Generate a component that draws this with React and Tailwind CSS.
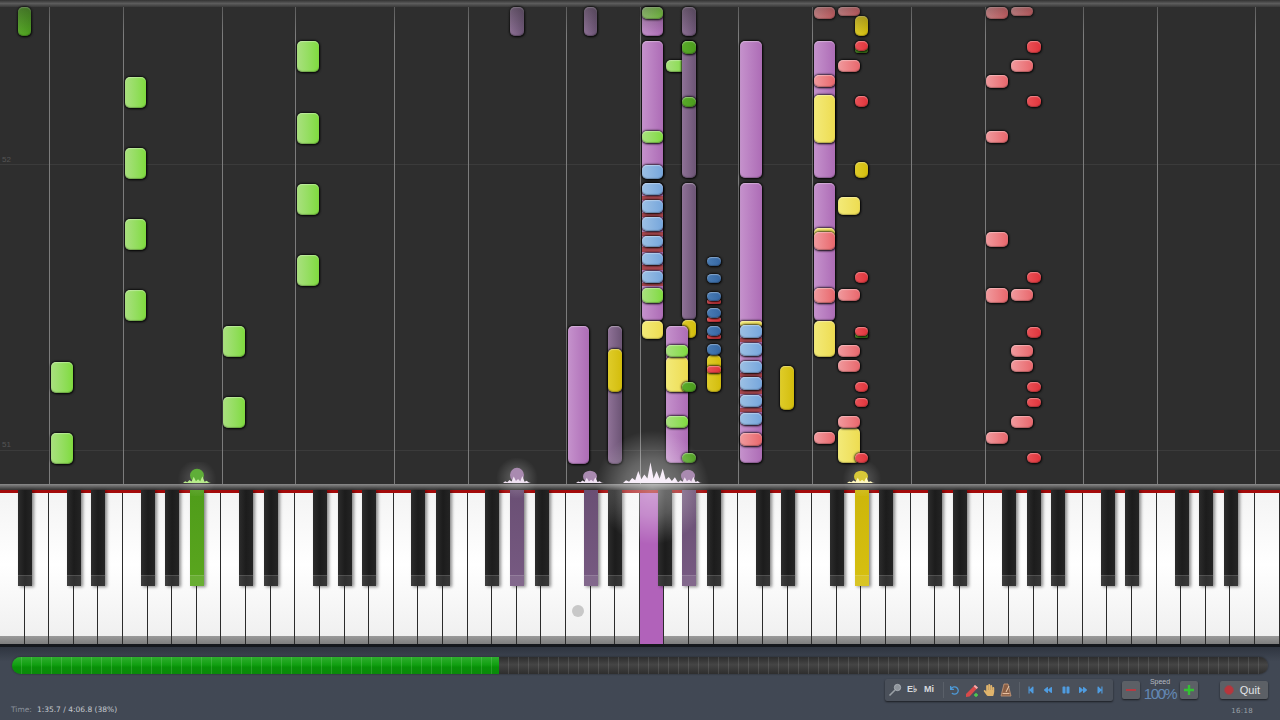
import React from "react";
import { FaHandPaper, FaStepBackward, FaBackward, FaPause, FaForward, FaStepForward, FaUndo } from "react-icons/fa";

const KEY = 1280 / 52;
const BEVEL = "shadow-[inset_0_1px_1px_rgba(255,255,255,.35),inset_0_-1px_1px_rgba(0,0,0,.25),0_0_2px_1px_rgba(0,0,0,.7),1px_1px_2px_rgba(0,0,0,.5)]";
const KIND = {
  g: "bg-linear-to-r from-[#a9e07e] to-[#7fdb3c]",
  G: "bg-linear-to-r from-[#5aab2a] to-[#4a9c1c]",
  p: "bg-linear-to-r from-[#c592cc] to-[#ad6cb6]",
  P: "bg-linear-to-r from-[#8f7297] to-[#6c5475]",
  y: "bg-linear-to-r from-[#f3ea78] to-[#eddc50]",
  Y: "bg-linear-to-r from-[#dfcc28] to-[#d3bd08]",
  b: "bg-linear-to-r from-[#9cc0e4] to-[#76a6dc]",
  B: "bg-linear-to-r from-[#4a7cb4] to-[#3567a4]",
  r: "bg-linear-to-r from-[#f09a9e] to-[#e8666c]",
  R: "bg-linear-to-r from-[#ea5056] to-[#e0343c]",
  s: "bg-[#a8474f]",
};

const A = 641.5, B = 682, C = 740, D = 813.5, E = 838, F = 854.5, W = 21.5, N = 13.5;
const NOTES = [
  [17.5, 7, N, 29, "G"],
  ...[77, 148, 219, 290].map((y) => [124.5, y, W, 31, "g"]),
  ...[41, 113, 184, 255].map((y) => [297, y, W, 31, "g"]),
  ...[362, 433].map((y) => [51, y, W, 31, "g"]),
  ...[326, 397].map((y) => [223, y, W, 31, "g"]),
  [510, 7, N, 29, "P"],
  [583.5, 7, N, 29, "P"],
  [567.5, 326, W, 138, "p"],
  [608, 326, N, 138, "P"],
  [608, 349, N, 43, "Y"],
  [A, 7, W, 29, "p"],
  [A, 7, W, 12, "g"],
  [A, 41, W, 137, "p"],
  [A, 131, W, 12, "g"],
  [A, 165, W, 14, "b"],
  [A, 183, W, 138, "p"],
  [A, 196, W, 4, "s"], [A, 213, W, 4, "s"], [A, 232, W, 4, "s"], [A, 247, W, 5, "s"], [A, 265, W, 5, "s"], [A, 283, W, 3, "s"],
  [A, 183, W, 12, "b"], [A, 200, W, 13, "b"], [A, 217, W, 14, "b"], [A, 236, W, 11, "b"], [A, 253, W, 12, "b"], [A, 271, W, 12, "b"],
  [A, 288, W, 15, "g"],
  [A, 321, W, 18, "y"],
  [666, 60, 21, 12, "g"],
  [B, 7, N, 29, "P"],
  [B, 41, N, 137, "P"],
  [B, 41, N, 13, "G"],
  [B, 97, N, 10, "G"],
  [B, 183, N, 137, "P"],
  [B, 320, N, 18, "Y"],
  [666, 326, W, 137, "p"],
  [666, 357, W, 35, "y"],
  [666, 345, W, 12, "g"],
  [666, 416, W, 12, "g"],
  [B, 382, N, 10, "G"],
  [B, 453, N, 10, "G"],
  [707, 257, N, 9, "B"],
  [707, 274, N, 9, "B"],
  [707, 299, N, 5, "R"], [707, 292, N, 9, "B"],
  [707, 317, N, 5, "R"], [707, 308, N, 10, "B"],
  [707, 334, N, 5, "R"], [707, 326, N, 10, "B"],
  [707, 355, N, 37, "Y"],
  [707, 344, N, 11, "B"],
  [707, 366, N, 7, "R"],
  [C, 41, W, 137, "p"],
  [C, 183, W, 280, "p"],
  [C, 321, W, 6, "y"],
  [C, 338, W, 4, "s"], [C, 373, W, 4, "s"], [C, 390, W, 4, "s"], [C, 408, W, 4, "s"],
  [C, 325, W, 13, "b"], [C, 343, W, 13, "b"], [C, 361, W, 12, "b"], [C, 377, W, 13, "b"], [C, 395, W, 12, "b"], [C, 413, W, 12, "b"],
  [C, 433, W, 13, "r"],
  [780, 366, N, 44, "Y"],
  [D, 7, W, 12, "r"],
  [D, 41, W, 137, "p"],
  [D, 75, W, 12, "r"],
  [D, 95, W, 48, "y"],
  [D, 183, W, 138, "p"],
  [D, 228, W, 14, "y"],
  [D, 232, W, 18, "r"],
  [D, 288, W, 15, "r"],
  [D, 321, W, 36, "y"],
  [D, 432, W, 12, "r"],
  [E, 7, W, 9, "r"],
  [E, 60, W, 12, "r"],
  [E, 197, W, 18, "y"],
  [E, 289, W, 12, "r"],
  [E, 345, W, 12, "r"],
  [E, 360, W, 12, "r"],
  [E, 428, W, 35, "y"],
  [E, 416, W, 12, "r"],
  [F, 16, N, 20, "Y"],
  [F, 46, N, 7, "G"],
  [F, 41, N, 10, "R"],
  [F, 96, N, 11, "R"],
  [F, 162, N, 16, "Y"],
  [F, 272, N, 11, "R"],
  [F, 333, N, 5, "G"],
  [F, 327, N, 9, "R"],
  [F, 382, N, 10, "R"],
  [F, 398, N, 9, "R"],
  [F, 453, N, 10, "R"],
  ...[7, 75, 131, 232, 288, 432].map((y, i) => [986, y, W, [12, 13, 12, 15, 15, 12][i], "r"]),
  ...[7, 60, 289, 345, 360, 416].map((y, i) => [1011, y, W, [9, 12, 12, 12, 12, 12][i], "r"]),
  ...[41, 96, 272, 327, 382, 398, 453].map((y, i) => [1027, y, N, [12, 11, 11, 11, 10, 9, 10][i], "R"]),
];

const GRID = [2, 5, 9, 12, 16, 19, 23, 26, 30, 33, 37, 40, 44, 47, 51];
const BLACK = [];
for (let i = 1; i < 52; i++) if ([1, 3, 4, 6, 0].includes(i % 7)) BLACK.push(i);
const ACTIVE = {
  8: "bg-linear-to-b from-[#4f9c1a] to-[#5aa61e]",
  21: "bg-linear-to-b from-[#6a4f74] to-[#775a82]",
  24: "bg-linear-to-b from-[#6a4f74] to-[#775a82]",
  28: "bg-linear-to-b from-[#6a4f74] to-[#775a82]",
  35: "bg-linear-to-b from-[#cdb60a] to-[#d6c010]",
};
const JAG = [1, 0.55, 0.8, 0.45, 1, 0.6, 0.85, 0.5, 0.95, 0.65];

function Burst({ x, w, h, dome, spike, n = 13, peak = 22, ry = 18 }) {
  const pts = [];
  for (let i = 0; i <= n; i++) {
    const t = i / n;
    const px = t * 100;
    const env = Math.pow(Math.sin(Math.PI * t), 1.1);
    const py = 40 - (i % 2 ? peak * env * JAG[((i - 1) / 2) % JAG.length] : peak * 0.22 * env);
    pts.push(`${px},${py}`);
  }
  return (
    <svg className="absolute pointer-events-none" style={{ left: x - w / 2, top: 483 - h, width: w, height: h }} viewBox="0 0 100 40" preserveAspectRatio="none">
      {ry > 0 && <ellipse cx="50" cy={ry + 2} rx="25" ry={ry} fill={dome} />}
      <polygon points={`0,40 ${pts.join(" ")} 100,40`} fill={spike} />
    </svg>
  );
}

function Metronome() {
  return (
    <svg width="12" height="14" viewBox="0 0 12 14">
      <path d="M4 1h4l3 12H1z" fill="#8a5f45" stroke="#c99a7a" strokeWidth="0.8" />
      <path d="M6 9l3-6" stroke="#f0d0b0" strokeWidth="1" />
      <path d="M2.5 10.5h7" stroke="#e8c0a0" strokeWidth="1.2" />
    </svg>
  );
}

function Pencil() {
  return (
    <svg width="15" height="15" viewBox="0 0 15 15">
      <path d="M1 11L10 2l3 2.5L4.5 13.5 1 14z" fill="#d84a4a" />
      <path d="M10 2l3 2.5-1.4 1.4-3-2.6z" fill="#eeb0b0" />
      <path d="M11 10v4M9 12h4" stroke="#4fd04f" strokeWidth="1.4" />
    </svg>
  );
}

function Mic() {
  return (
    <svg width="14" height="14" viewBox="0 0 14 14">
      <circle cx="9.5" cy="4.5" r="3.2" fill="#8f959c" stroke="#b8bcc2" strokeWidth="0.7" />
      <path d="M7 7L1.5 12.5" stroke="#9aa0a6" strokeWidth="1.6" />
    </svg>
  );
}

const Sep = () => <div className="w-px h-[16px] bg-[#3c424b] border-r border-[#5a6069]" />;

export default function App() {
  return (
    <div className="relative w-[1280px] h-[720px] overflow-hidden flex flex-col bg-[#2e2e2e] font-['Liberation_Sans',sans-serif]">
      <div className="h-[7px] shrink-0 bg-linear-to-b from-[#333333] via-[#5c5c5c] to-[#3a3a3a]" />

      <div className="relative h-[477px] shrink-0 bg-[#2e2e2e] overflow-hidden">
        <div className="absolute left-0 right-0 top-[157px] h-px bg-[#3b3b3b]" />
        <div className="absolute left-0 right-0 top-[443px] h-px bg-[#3b3b3b]" />
        <span className="absolute left-[2px] top-[147px] text-[8px] text-[#555555]">52</span>
        <span className="absolute left-[2px] top-[432px] text-[8px] text-[#555555]">51</span>
        {GRID.map((i) => (
          <div key={i} className="absolute top-0 bottom-0 w-px bg-[#7c7c7c]" style={{ left: Math.round(i * KEY) }} />
        ))}
      </div>

      {NOTES.map(([x, y, w, h, k], i) => (
        <div
          key={i}
          className={`absolute ${k === "s" ? "" : `rounded-[5px] ${BEVEL}`} ${KIND[k]}`}
          style={{ left: x, top: y, width: w, height: h }}
        />
      ))}
      <div className="absolute left-0 right-0 top-[7px] h-[28px] bg-linear-to-b from-[rgba(46,46,46,.4)] to-transparent" />

      <div className="relative h-[160px] shrink-0">
        <div className="h-[6px] bg-linear-to-b from-[#8c8c8c] to-[#333333]" />
        <div className="h-[3px] bg-[#a30a0a]" />
        <div className="flex h-[151px]">
          {Array.from({ length: 52 }, (_, i) => (
            <div key={i} className="flex-1 flex flex-col border-r border-[#2c2c2c]">
              {i === 26 ? (
                <div className="flex-1 bg-[#b162ba]" />
              ) : (
                <>
                  <div className="h-[143px] bg-linear-to-b from-[#f4f4f4] via-[#ffffff] to-[#f0f0f0]" />
                  <div className="h-[8px] bg-linear-to-b from-[#9a9a9a] to-[#7e7e7e]" />
                </>
              )}
            </div>
          ))}
        </div>
        {BLACK.map((i) => (
          <div
            key={i}
            className={`absolute top-[6px] w-[14px] h-[96px] shadow-[2px_1px_3px_rgba(0,0,0,.45)] ${ACTIVE[i] || "bg-linear-to-r from-[#2c2c2c] via-[#1c1c1c] to-[#242424]"}`}
            style={{ left: i * KEY - 7 }}
          >
            <div className="absolute left-0 right-0 bottom-0 h-[11px] bg-[rgba(255,255,255,.09)] border-t border-[rgba(255,255,255,.14)]" />
          </div>
        ))}
        <div className="absolute left-[572px] top-[121px] w-[12px] h-[12px] rounded-full bg-[#c8c8c8]" />
      </div>

      <div className="flex-1 flex flex-col bg-[#3f4653]">
        <div className="h-[3px] bg-[#15181d]" />
        <div className="flex-1 flex flex-col bg-linear-to-b from-[#2f3540] from-[0%] to-[#414854] to-[20%] px-3 pt-[10px]">
          <div className="h-[17px] flex rounded-full overflow-hidden shadow-[0_0_2px_rgba(0,0,0,.5)]">
            <div className="w-[487px] bg-[repeating-linear-gradient(90deg,transparent_0,transparent_9px,rgba(255,255,255,.13)_9px,rgba(255,255,255,.13)_10px),linear-gradient(180deg,#2fae2f_0%,#12a012_45%,#089008_60%,#0a8a0a_100%)]" />
            <div className="flex-1 bg-[repeating-linear-gradient(90deg,transparent_0,transparent_9px,rgba(255,255,255,.1)_9px,rgba(255,255,255,.1)_10px),linear-gradient(180deg,#2d2d2d_0%,#454545_45%,#2e2e2e_100%)]" />
          </div>
          <div className="flex items-start mt-[5px]">
            <div className="mt-[26px] -ml-px text-[7.5px] leading-[10px] text-[#c5c9cf] font-['DejaVu_Sans',sans-serif] whitespace-nowrap">
              <span className="text-[#8b929c] mr-[5px]">Time:</span>1:35.7 / 4:06.8 (38%)
            </div>
            <div className="flex-1" />
            <div className="flex items-center h-[22px] w-[228px] pl-[3px] bg-[#4a505a] rounded-[2px] shadow-[0_1px_2px_rgba(0,0,0,.6)] text-[#d8dadd] text-[9px] font-bold">
              <div className="w-[14px] flex justify-center"><Mic /></div>
              <div className="ml-[4px] w-[12px] text-center">E♭</div>
              <div className="ml-[5px] w-[12px] text-center">Mi</div>
              <div className="ml-[8px]"><Sep /></div>
              <FaUndo className="ml-[6px] text-[#4d9ad8]" size={9} />
              <div className="ml-[6px]"><Pencil /></div>
              <FaHandPaper className="ml-[3px] text-[#e0b46c]" size={12} />
              <div className="ml-[5px]"><Metronome /></div>
              <div className="ml-[7px]"><Sep /></div>
              <div className="flex items-center gap-[9.3px] ml-[7px] text-[#4f9ce0]">
                <FaStepBackward size={8} />
                <FaBackward size={8} />
                <FaPause size={8} />
                <FaForward size={8} />
                <FaStepForward size={8} />
              </div>
            </div>
            <div className="ml-[9px] mt-[2px] w-[18px] h-[18px] flex items-center justify-center bg-[#5c6066] rounded-[2px] shadow-[0_1px_2px_rgba(0,0,0,.6)]">
              <div className="w-[10px] h-[2px] bg-[#b23c44]" />
            </div>
            <div className="w-[40px] flex flex-col items-center -mt-[1px]">
              <span className="text-[7px] leading-[8px] text-[#b4bac2]">Speed</span>
              <span className="text-[15px] leading-[16px] tracking-[-1.5px] text-[#6488b4]">100%</span>
            </div>
            <div className="mt-[2px] w-[18px] h-[18px] flex items-center justify-center bg-[#5c6066] rounded-[2px] shadow-[0_1px_2px_rgba(0,0,0,.6)]">
              <svg width="10" height="10" viewBox="0 0 10 10"><path d="M5 0v10M0 5h10" stroke="#34c234" strokeWidth="2.4" /></svg>
            </div>
            <div className="relative ml-[22px] mt-[2px] w-[48px] h-[18px] flex items-center justify-end pr-[8px] bg-[#5c6066] rounded-[2px] shadow-[0_1px_2px_rgba(0,0,0,.6)] text-[11px] text-[#e2e4e6]">
              <div className="absolute left-[4px] top-[4px] w-[10px] h-[10px] rounded-full bg-[#b8353c] border border-[#8c4a50]" />
              Quit
            </div>
          </div>
          <div className="self-end mr-[15px] -mt-[9px] text-[7px] leading-[10px] text-[#9aa0a8] tracking-[0.3px] font-['DejaVu_Sans',sans-serif]">16:18</div>
        </div>
      </div>

      <div className="absolute left-[595px] top-[430px] w-[115px] h-[115px] pointer-events-none bg-[radial-gradient(circle,rgba(255,255,255,.42)_0%,rgba(255,255,255,.26)_35%,rgba(255,255,255,0)_70%)]" />
      <div className="absolute left-[175px] top-[462px] w-[44px] h-[34px] pointer-events-none bg-[radial-gradient(circle,rgba(255,255,255,.2)_0%,rgba(255,255,255,0)_70%)]" />
      <div className="absolute left-[495px] top-[458px] w-[44px] h-[40px] pointer-events-none bg-[radial-gradient(circle,rgba(255,255,255,.28)_0%,rgba(255,255,255,0)_70%)]" />
      <div className="absolute left-[840px] top-[462px] w-[44px] h-[34px] pointer-events-none bg-[radial-gradient(circle,rgba(255,255,255,.22)_0%,rgba(255,255,255,0)_70%)]" />
      <Burst x={197} w={28} h={15} dome="#5fae38" spike="#b8ec8c" />
      <Burst x={517} w={28} h={16} dome="#a98ab0" spike="#f0e2f2" />
      <Burst x={590} w={28} h={13} dome="#a98ab0" spike="#f0e2f2" />
      <Burst x={652} w={58} h={22} n={19} peak={38} ry={0} dome="#f8eefa" spike="#f8eefa" />
      <Burst x={688} w={28} h={14} dome="#a98ab0" spike="#f0e2f2" />
      <Burst x={861} w={28} h={13} dome="#d8c838" spike="#fff7c0" />
    </div>
  );
}
